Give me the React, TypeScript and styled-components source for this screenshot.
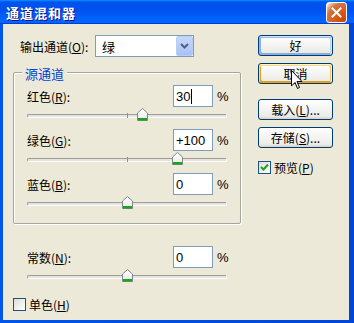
import React from "react";
import styled, { createGlobalStyle, css } from "styled-components";

const FONT = `"Noto Sans CJK SC", "Liberation Sans", sans-serif`;
const NUM_FONT = `"Liberation Sans", "Noto Sans CJK SC", sans-serif`;

const Global = createGlobalStyle`
  html, body { margin: 0; padding: 0; width: 354px; height: 323px; overflow: hidden; background: #ECE9D8; }
  * { box-sizing: border-box; }
`;

const Window = styled.div`
  position: relative;
  width: 354px;
  height: 323px;
  display: flex;
  flex-direction: column;
  background: linear-gradient(90deg, #0055ea 0%, #0045d8 100%);
  font-family: ${FONT};
  font-size: 12px;
  color: #000;
`;

const TitleBar = styled.div`
  flex: none;
  height: 24px;
  display: flex;
  align-items: center;
  justify-content: space-between;
  padding: 0 7px 0 6px;
  background: linear-gradient(180deg, #0997ff, #0053ee 8%, #0050ee 40%, #06f 88%, #06f 93%, #005bff 95%, #003dd7 96%, #003dd7);
`;

const Title = styled.span`
  color: #fff;
  font-weight: 700;
  font-size: 13px;
  letter-spacing: 1px;
  text-shadow: 1px 1px 0 #0f1089;
`;

const CloseButton = styled.div`
  width: 21px;
  height: 21px;
  border: 1px solid #fff;
  border-radius: 3px;
  display: flex;
  align-items: center;
  justify-content: center;
  background: radial-gradient(circle at 90% 90%, #cc4600 0%, #dc6527 55%, #cd7546 70%, #ffccb2 90%, #fff 100%);
`;

const Body = styled.div`
  flex: 1;
  margin: 0 5px 3px 3px;
  background: #ece9d8;
  display: flex;
  padding-top: 11px;
`;

const LeftCol = styled.div`
  flex: none;
  width: 255px;
  padding-left: 10px;
  display: flex;
  flex-direction: column;
`;

const RightCol = styled.div`
  flex: none;
  width: 75px;
  display: flex;
  flex-direction: column;
`;

const OutputRow = styled.div`
  display: flex;
  align-items: center;
  height: 22px;
  padding-left: 7px;
`;

const Label = styled.span<{ $w: number }>`
  width: ${(p) => p.$w}px;
  flex: none;
  white-space: nowrap;
`;

const U = styled.span`
  text-decoration: underline;
`;

const Select = styled.div`
  width: 99px;
  height: 22px;
  border: 1px solid #7f9db9;
  background: #fff;
  display: flex;
  align-items: center;
  padding-left: 6px;
  font-size: 13px;
`;

const SelectValue = styled.span`
  flex: 1;
`;

const DropButton = styled.div`
  width: 17px;
  height: 20px;
  margin-right: 0;
  border: 1px solid #b9cdf6;
  border-radius: 2px;
  background: linear-gradient(180deg, #c6d7fc 0%, #b6cbf8 60%, #a9c1f4 100%);
  display: flex;
  align-items: center;
  justify-content: center;
`;

const Group = styled.div`
  position: relative;
  margin-top: 15px;
  width: 228px;
  height: 152px;
  border: 1px solid #a7a69e;
  border-radius: 2px;
  box-shadow: inset 1px 1px 0 #fff, 1px 1px 0 #fff;
  padding: 12px 0 0 13px;
`;

const Legend = styled.span`
  position: absolute;
  top: -9px;
  left: 8px;
  padding: 0 3px;
  background: #ece9d8;
  color: #0046d5;
  font-size: 13px;
`;

const ChannelRow = styled.div<{ $indent?: number; $mt?: number }>`
  display: flex;
  flex-direction: column;
  height: 44px;
  margin-left: ${(p) => p.$indent ?? 0}px;
  margin-top: ${(p) => p.$mt ?? 0}px;
`;

const InputLine = styled.div`
  display: flex;
  align-items: center;
  height: 22px;
`;

const NumInput = styled.div`
  width: 40px;
  height: 22px;
  border: 1px solid #7f9db9;
  background: #fff;
  display: flex;
  align-items: center;
  padding-left: 2px;
  font-family: ${NUM_FONT};
  font-size: 13px;
`;

const Caret = styled.span`
  display: inline-block;
  width: 1px;
  height: 15px;
  background: #000;
  margin-left: 1px;
`;

const Percent = styled.span`
  margin-left: 4px;
  font-family: ${NUM_FONT};
  font-size: 13px;
`;

const SliderArea = styled.div`
  position: relative;
  height: 22px;
  width: 200px;
`;

const Track = styled.div`
  position: absolute;
  left: 0;
  right: 0;
  top: 7px;
  height: 4px;
  border: 1px solid;
  border-color: #9d9c99 #fff #fff #9d9c99;
  border-radius: 2px;
  background: #e6e4dc;
`;

const Tick = styled.div`
  position: absolute;
  left: 100px;
  top: 6px;
  width: 1px;
  height: 5px;
  background: #8f8e8a;
`;

const Thumb = styled.svg`
  position: absolute;
  top: 1px;
  width: 11px;
  height: 13px;
`;

const CheckRow = styled.div<{ $mt: number }>`
  display: flex;
  align-items: center;
  gap: 3px;
  margin-top: ${(p) => p.$mt}px;
  height: 13px;
`;

const CheckBox = styled.div`
  width: 13px;
  height: 13px;
  border: 1px solid #1c5180;
  background: linear-gradient(135deg, #dcdcd7 0%, #fff 100%);
  display: flex;
  align-items: center;
  justify-content: center;
`;

const Button = styled.div<{ $mt: number; $state?: "default" | "hover" }>`
  height: 21px;
  margin-top: ${(p) => p.$mt}px;
  border: 1px solid #003c74;
  border-radius: 3px;
  background: linear-gradient(180deg, #fff, #ecebe6 86%, #d6d0c5);
  display: flex;
  align-items: center;
  justify-content: center;
  font-size: 12px;
  ${(p) =>
    p.$state === "default" &&
    css`
      box-shadow: inset -1px 1px #cee7ff, inset 1px 2px #98b8ea, inset -2px 2px #bcd4f6, inset 1px -1px #89ade4, inset 2px -2px #89ade4;
    `}
  ${(p) =>
    p.$state === "hover" &&
    css`
      box-shadow: inset -1px 1px #fff0cf, inset 1px 2px #fdd889, inset -2px 2px #fbc761, inset 2px -2px #e5a01a;
    `}
`;

const Cursor = styled.svg`
  position: absolute;
  left: 291px;
  top: 70px;
  width: 12px;
  height: 20px;
`;

const ThumbIcon = ({ value }: { value: number }) => {
  const pos = ((value + 200) / 400) * 200;
  return (
    <Thumb viewBox="0 0 11 13" style={{ left: pos - 5 }}>
      <defs>
        <linearGradient id="tg" x1="0" y1="0" x2="0" y2="1">
          <stop offset="0" stopColor="#ffffff" />
          <stop offset="1" stopColor="#e6ebe6" />
        </linearGradient>
      </defs>
      <polygon points="5.5,0.5 10.5,5 10.5,12.5 0.5,12.5 0.5,5" fill="url(#tg)" stroke="#7a8a8c" strokeWidth="1" />
      <rect x="1" y="10" width="9" height="2.5" fill="#21a121" />
    </Thumb>
  );
};

const Slider = ({ value }: { value: number }) => (
  <SliderArea>
    <Track />
    <Tick />
    <ThumbIcon value={value} />
  </SliderArea>
);

const Channel = ({
  name,
  mn,
  value,
  caret,
  indent,
  mt,
  value0,
}: {
  name: string;
  mn: string;
  value: string;
  caret?: boolean;
  indent?: number;
  mt?: number;
  value0: number;
}) => (
  <ChannelRow $indent={indent} $mt={mt}>
    <InputLine>
      <Label $w={146}>
        {name}(<U>{mn}</U>):
      </Label>
      <NumInput>
        {value}
        {caret && <Caret />}
      </NumInput>
      <Percent>%</Percent>
    </InputLine>
    <Slider value={value0} />
  </ChannelRow>
);

export default function App() {
  return (
    <>
      <Global />
      <Window>
        <TitleBar>
          <Title>通道混和器</Title>
          <CloseButton>
            <svg width="11" height="11" viewBox="0 0 11 11">
              <path d="M1.5 1.5 L9.5 9.5 M9.5 1.5 L1.5 9.5" stroke="#fff" strokeWidth="2" strokeLinecap="square" />
            </svg>
          </CloseButton>
        </TitleBar>
        <Body>
          <LeftCol>
            <OutputRow>
              <Label $w={75}>
                输出通道(<U>O</U>):
              </Label>
              <Select>
                <SelectValue>绿</SelectValue>
                <DropButton>
                  <svg width="9" height="6" viewBox="0 0 9 6">
                    <path d="M1 1 L4.5 4.5 L8 1" stroke="#4d6185" strokeWidth="2" fill="none" />
                  </svg>
                </DropButton>
              </Select>
            </OutputRow>
            <Group>
              <Legend>源通道</Legend>
              <Channel name="红色" mn="R" value="30" caret value0={30} />
              <Channel name="绿色" mn="G" value="+100" value0={100} />
              <Channel name="蓝色" mn="B" value="0" value0={0} />
            </Group>
            <Channel name="常数" mn="N" value="0" value0={0} indent={14} mt={22} />
            <CheckRow $mt={8}>
              <CheckBox />
              <span>
                单色(<U>H</U>)
              </span>
            </CheckRow>
          </LeftCol>
          <RightCol>
            <Button $mt={0} $state="default">好</Button>
            <Button $mt={7} $state="hover">取消</Button>
            <Button $mt={15}>
              载入(<U>L</U>)...
            </Button>
            <Button $mt={7}>
              存储(<U>S</U>)...
            </Button>
            <CheckRow $mt={13}>
              <CheckBox>
                <svg width="9" height="9" viewBox="0 0 9 9">
                  <path d="M1 4 L3.5 6.5 L8 1.5" stroke="#21a121" strokeWidth="2" fill="none" />
                </svg>
              </CheckBox>
              <span>
                预览(<U>P</U>)
              </span>
            </CheckRow>
          </RightCol>
        </Body>
        <Cursor viewBox="0 0 12 20">
          <polygon points="0.5,0.5 0.5,16 4,12.5 6.5,18.5 8.5,17.5 6,11.5 11,11.5" fill="#fff" stroke="#000" strokeWidth="1" />
        </Cursor>
      </Window>
    </>
  );
}
